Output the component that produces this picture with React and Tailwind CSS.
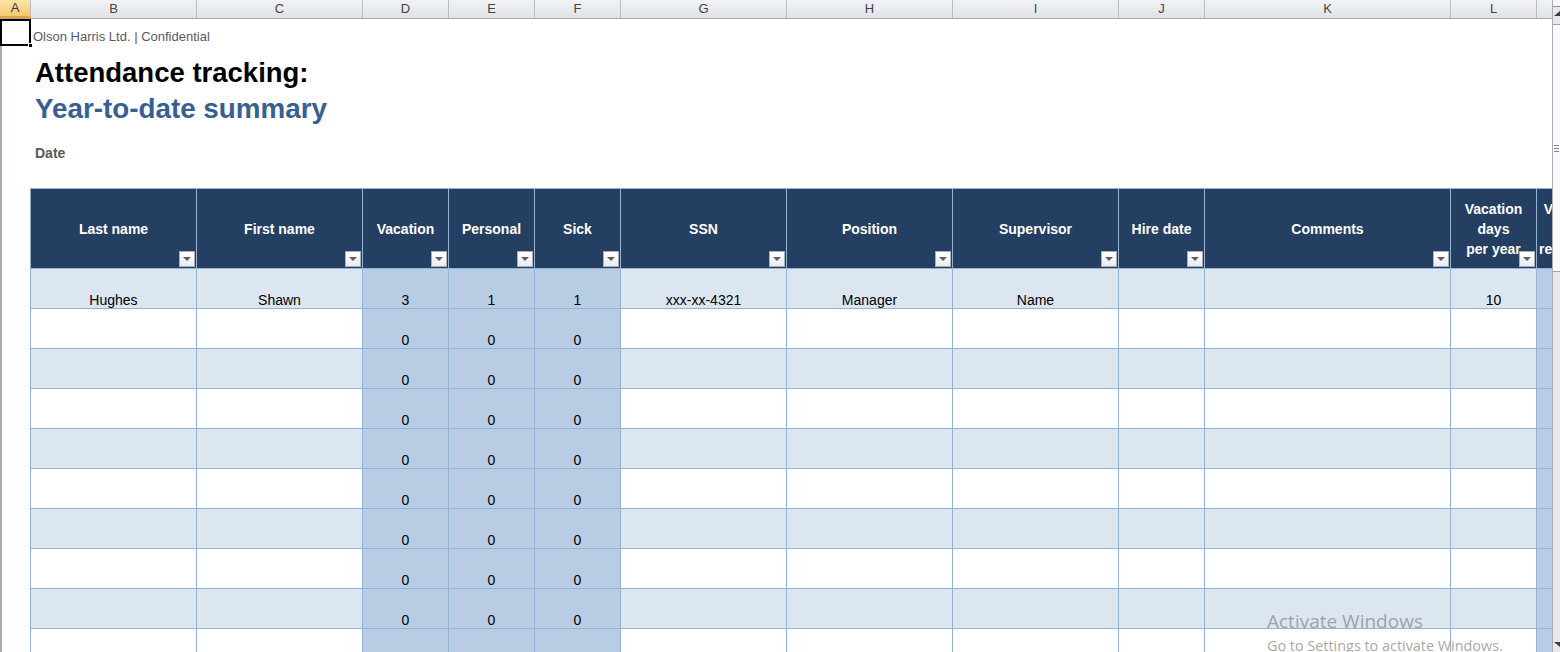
const COLS = [
  { key: "A", w: 30 },
  { key: "B", w: 166 },
  { key: "C", w: 166 },
  { key: "D", w: 86 },
  { key: "E", w: 86 },
  { key: "F", w: 86 },
  { key: "G", w: 166 },
  { key: "H", w: 166 },
  { key: "I", w: 166 },
  { key: "J", w: 86 },
  { key: "K", w: 246 },
  { key: "L", w: 86 },
  { key: "", w: 86 },
];

const HEADERS = [
  { lines: ["Last name"], w: 166 },
  { lines: ["First name"], w: 166 },
  { lines: ["Vacation"], w: 86 },
  { lines: ["Personal"], w: 86 },
  { lines: ["Sick"], w: 86 },
  { lines: ["SSN"], w: 166 },
  { lines: ["Position"], w: 166 },
  { lines: ["Supervisor"], w: 166 },
  { lines: ["Hire date"], w: 86 },
  { lines: ["Comments"], w: 246 },
  { lines: ["Vacation", "days", "per year"], w: 86 },
  { lines: ["Vacation", "days", "remaining"], w: 72, nofilter: true },
];

const FIRST = ["Hughes", "Shawn", "3", "1", "1", "xxx-xx-4321", "Manager", "Name", "", "", "10", ""];
const EMPTY = ["", "", "0", "0", "0", "", "", "", "", "", "", ""];

function FilterButton() {
  return (
    <div className="absolute right-[1px] bottom-[1px] w-[16px] h-[16px] bg-gradient-to-b from-white to-[#e9ebee] border border-[#a9aeb5] flex items-center justify-center">
      <svg width="8" height="4" viewBox="0 0 8 4">
        <path d="M0 0 L8 0 L4 4 Z" fill="#5c5f63" />
      </svg>
    </div>
  );
}

function ColumnBar() {
  return (
    <div className="flex h-[19px] shrink-0 bg-gradient-to-b from-[#f1f3f6] to-[#dfe2e7] border-b border-[#a7abb0]">
      {COLS.map((c, i) => (
        <div
          key={i}
          style={{ width: c.w + (c.key === "A" ? 1 : 0) }}
          className={
            "shrink-0 border-r border-[#b9bdc3] flex items-center justify-center text-[13px] " +
            (c.key === "A"
              ? "bg-gradient-to-b from-[#fbe3a8] to-[#f6c96a] text-[#3a3a3a] border-b-2 border-b-[#e3a43a]"
              : "text-[#444]")
          }
        >
          {c.key}
        </div>
      ))}
    </div>
  );
}

function Row({ cells, band }) {
  return (
    <div className="flex h-[40px] shrink-0">
      <div className="w-[29px] shrink-0 bg-white border-r border-[#95b3d7]" />
      {cells.map((t, i) => {
        const dark = i >= 2 && i <= 4;
        const bg = i === 11 || dark ? "bg-[#b8cce4]" : band ? "bg-[#dce6f1]" : "bg-white";
        return (
          <div
            key={i}
            style={{ width: HEADERS[i].w }}
            className={`shrink-0 ${bg} border-r border-b border-[#95b3d7] flex items-end justify-center text-[14px] text-black leading-[16px]`}
          >
            {t}
          </div>
        );
      })}
    </div>
  );
}

function Scrollbar() {
  return (
    <div className="w-[8px] h-full shrink-0 bg-[#e6e8eb] border-l border-[#a9adb3] flex flex-col">
      <div className="h-[7px] bg-[#f4f5f7] border-b border-[#8d9298]" />
      <div className="h-[11px] flex items-end justify-center pb-[2px]">
        <svg width="6" height="5" viewBox="0 0 6 5">
          <path d="M6 0 L6 5 L0 5 Z" fill="#3b3b3b" />
        </svg>
      </div>
      <div className="h-[248px] mt-[6px] bg-[#fbfbfc] border-y border-[#9aa0a7] flex items-center justify-center">
        <div className="w-[5px] flex flex-col gap-[2px]">
          <div className="h-px bg-[#7d828a]" />
          <div className="h-px bg-[#7d828a]" />
          <div className="h-px bg-[#7d828a]" />
        </div>
      </div>
      <div className="flex-1" />
      <div className="h-[10px] flex items-start justify-center">
        <svg width="6" height="5" viewBox="0 0 6 5">
          <path d="M0 0 L6 0 L6 5 Z" fill="#3b3b3b" />
        </svg>
      </div>
    </div>
  );
}

export default function App() {
  const rows = [FIRST, EMPTY, EMPTY, EMPTY, EMPTY, EMPTY, EMPTY, EMPTY, EMPTY, EMPTY];
  return (
    <div className="relative w-[1560px] h-[652px] overflow-hidden bg-white flex font-['Liberation_Sans',Arial,sans-serif]">
      <div className="flex-1 min-w-0 flex flex-col overflow-hidden">
        <ColumnBar />
        <div className="relative flex-1 flex flex-col border-l-2 border-[#a6a9ad]">
          {/* selected cell A1 */}
          <div className="absolute left-[-2px] top-0 w-[31px] h-[27px] border-2 border-black">
            <div className="absolute right-[-4px] bottom-[-4px] w-[5px] h-[5px] bg-black border border-white" />
          </div>

          <div className="h-[27px] shrink-0 pl-[31px] pb-[2px] flex items-end text-[13px] leading-[15px] text-[#5a5866]">
            Olson Harris Ltd. | Confidential
          </div>
          <div className="h-[9px] shrink-0" />
          <div className="h-[36px] shrink-0 pl-[33px] flex items-center text-[27.5px] font-bold text-black leading-none">
            Attendance tracking:
          </div>
          <div className="h-[36px] shrink-0 pl-[33px] flex items-center text-[27.8px] font-bold text-[#376092] leading-none">
            Year-to-date summary
          </div>
          <div className="h-[16px] shrink-0" />
          <div className="h-[20px] shrink-0 pl-[33px] flex items-center text-[14px] font-bold text-[#595959]">
            Date
          </div>
          <div className="h-[25px] shrink-0" />

          {/* header row */}
          <div className="flex h-[81px] shrink-0">
            <div className="w-[29px] shrink-0 border-r border-[#95b3d7]" />
            {HEADERS.map((h, i) => (
              <div
                key={i}
                style={{ width: h.w }}
                className="relative shrink-0 bg-[#243f62] border-r border-t border-b border-[#95b3d7] flex flex-col items-center justify-center text-white font-bold text-[14px] leading-[20px]"
              >
                {h.lines.map((l) => (
                  <span key={l} className="whitespace-nowrap">{l}</span>
                ))}
                {!h.nofilter && <FilterButton />}
              </div>
            ))}
          </div>

          {rows.map((r, i) => (
            <Row key={i} cells={r} band={i % 2 === 0} />
          ))}
        </div>
      </div>
      <Scrollbar />

      {/* Windows watermark */}
      <div className="absolute left-[1267px] top-[610px] font-['Open_Sans','Noto_Sans',sans-serif] text-[#8f8f8f]/80 leading-tight">
        <div className="text-[19px]">Activate Windows</div>
        <div className="text-[14.4px] mt-[3px]">Go to Settings to activate Windows.</div>
      </div>
    </div>
  );
}
